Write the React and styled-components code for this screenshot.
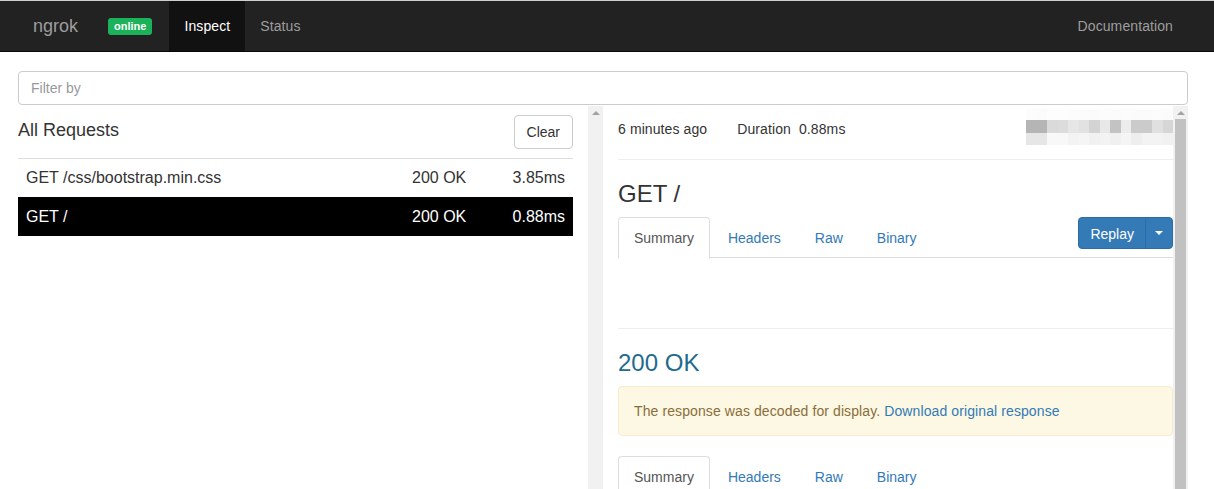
import React from "react";
import styled, { createGlobalStyle } from "styled-components";

const GlobalStyle = createGlobalStyle`
  html, body {
    margin: 0;
    padding: 0;
    height: 100%;
    background: #fff;
    font-family: "Liberation Sans", Arial, sans-serif;
    font-size: 14px;
    line-height: 1.42857;
    color: #333;
  }
  * { box-sizing: border-box; }
`;

const requests = [
  { path: "GET /css/bootstrap.min.css", status: "200 OK", duration: "3.85ms" },
  { path: "GET /", status: "200 OK", duration: "0.88ms", selected: true },
];

// pixelated (blurred out) client address
const blurRows = [
  { h: 11, cells: ["#fcfcfc", "#fbfbfb", "#fdfdfd", "#fdfdfd", "#fcfcfc", "#fcfcfc", "#fbfbfb", "#fcfcfc", "#fbfbfb", "#fcfcfc", "#fbfbfb", "#fbfbfb", "#fcfcfc", "#fbfbfb"] },
  { h: 13, cells: ["#b5b5b5", "#b5b5b5", "#dadada", "#dcdcdc", "#e6e6e6", "#e2e2e2", "#d3d3d3", "#e8e8e8", "#c3c3c3", "#ececec", "#cbcbcb", "#cbcbcb", "#e0e0e0", "#d6d6d6"] },
  { h: 12, cells: ["#e6e6e6", "#e6e6e6", "#f8f8f8", "#f8f8f8", "#f3f3f3", "#f5f5f5", "#f1f1f1", "#f3f3f3", "#f0f0f0", "#f5f5f5", "#eeeeee", "#f3f3f3", "#f3f3f3", "#f1f1f1"] },
];

const tabNames = ["Summary", "Headers", "Raw", "Binary"];

const Page = styled.div`
  height: 100vh;
  display: flex;
  flex-direction: column;
  overflow: hidden;
`;

const Navbar = styled.nav`
  height: 52px;
  flex-shrink: 0;
  display: flex;
  align-items: stretch;
  background: #222;
  border-top: 1px solid #cfcfcf;
  border-bottom: 1px solid #080808;
  padding: 0 26px 0 18px;
`;

const Brand = styled.span`
  display: flex;
  align-items: center;
  padding: 1px 15px 0;
  font-size: 18px;
  color: #9d9d9d;
`;

const Badge = styled.span`
  align-self: center;
  margin: 1px 17px 0 15px;
  padding: 1px 6px 2px;
  background: #1cb25a;
  color: #fff;
  font-size: 11px;
  font-weight: bold;
  line-height: 14px;
  border-radius: 3px;
`;

const NavLink = styled.a`
  display: flex;
  align-items: center;
  padding: 1px 15px 0;
  font-size: 14px;
  letter-spacing: 0.1px;
  color: ${(p) => (p.$active ? "#fff" : "#9d9d9d")};
  background: ${(p) => (p.$active ? "#111" : "transparent")};
  text-decoration: none;
  margin-left: ${(p) => (p.$right ? "auto" : "0")};
`;

const Container = styled.div`
  flex: 1;
  min-height: 0;
  display: flex;
  flex-direction: column;
  padding: 19px 26px 0 18px;
`;

const Filter = styled.input`
  width: 100%;
  height: 34px;
  flex-shrink: 0;
  padding: 6px 12px;
  font-family: inherit;
  font-size: 14px;
  color: #555;
  border: 1px solid #ccc;
  border-radius: 4px;
  margin-bottom: 1px;
  &::placeholder { color: #999; }
`;

const Main = styled.div`
  flex: 1;
  min-height: 0;
  display: flex;
`;

const LeftCol = styled.div`
  width: 555px;
  flex-shrink: 0;
  margin-right: 15px;
`;

const ListHeader = styled.div`
  display: flex;
  align-items: center;
  justify-content: space-between;
  padding-top: 9px;
  margin-bottom: 9px;
`;

const ListTitle = styled.h4`
  margin: 0 0 3px;
  font-size: 18px;
  font-weight: 500;
  line-height: 1.1;
`;

const Button = styled.button`
  height: 34px;
  padding: 6px 12px;
  font-family: inherit;
  font-size: 14px;
  color: #333;
  background: #fff;
  border: 1px solid #ccc;
  border-radius: 4px;
`;

const ReqRow = styled.div`
  display: flex;
  height: 39px;
  align-items: center;
  padding: 0 8px;
  border-top: 1px solid #ddd;
  font-size: 16px;
  background: ${(p) => (p.$selected ? "#000" : "#fff")};
  color: ${(p) => (p.$selected ? "#fff" : "#333")};
  border-top-color: ${(p) => (p.$selected ? "#000" : "#ddd")};
`;

const ReqPath = styled.span`
  flex: 1;
`;

const ReqStatus = styled.span`
  width: 98px;
`;

const ReqDuration = styled.span`
  width: 55px;
  text-align: right;
`;

const Track = styled.div`
  width: 15px;
  flex-shrink: 0;
  background: #f1f1f1;
  display: flex;
  flex-direction: column;
  align-items: center;
  padding-top: 5px;
`;

const Arrow = styled.div`
  width: 0;
  height: 0;
  border-left: 4px solid transparent;
  border-right: 4px solid transparent;
  border-bottom: 4px solid #a3a3a3;
  margin-bottom: 4px;
`;

const Thumb = styled.div`
  width: 11px;
  flex: 1;
  background: #c1c1c1;
`;

const RightPane = styled.div`
  flex: 1;
  display: flex;
  min-width: 0;
  padding-left: 15px;
`;

const Detail = styled.div`
  flex: 1;
  min-width: 0;
  overflow: hidden;
`;

const Meta = styled.div`
  display: flex;
  align-items: center;
  height: 40px;
  margin-top: 3px;
  padding-top: 2px;
  letter-spacing: 0.1px;
`;

const MetaItem = styled.span`
  margin-right: 30px;
`;

const MetaValue = styled.span`
  margin-left: 8px;
`;

const Blur = styled.div`
  margin-left: auto;
  align-self: flex-start;
  margin-top: -2px;
  display: flex;
  flex-direction: column;
`;

const BlurRow = styled.div`
  display: grid;
  grid-template-columns: repeat(14, 10.5px);
`;

const Rule = styled.hr`
  border: 0;
  border-top: 1px solid #eee;
  margin: ${(p) => p.$margin || "20px 0"};
`;

const Title = styled.h3`
  margin: 20px 0 10px;
  font-size: 24px;
  font-weight: 500;
  line-height: 27px;
  color: ${(p) => p.$color || "#333"};
`;

const TabBar = styled.div`
  display: flex;
  align-items: flex-start;
  border-bottom: 1px solid #ddd;
  height: 41px;
`;

const Tab = styled.a`
  margin-right: 2px;
  margin-bottom: -1px;
  padding: 10px 15px;
  line-height: 20px;
  border: 1px solid ${(p) => (p.$active ? "#ddd" : "transparent")};
  border-bottom-color: ${(p) => (p.$active ? "#fff" : "transparent")};
  border-radius: 4px 4px 0 0;
  background: ${(p) => (p.$active ? "#fff" : "transparent")};
  color: ${(p) => (p.$active ? "#555" : "#337ab7")};
  text-decoration: none;
`;

const SplitButton = styled.div`
  margin-left: auto;
  display: flex;
  height: 32px;
`;

const PrimaryPart = styled.button`
  padding: ${(p) => (p.$caret ? "0 9px" : "1px 11px 0")};
  font-family: inherit;
  font-size: 14px;
  color: #fff;
  background: #337ab7;
  border: 1px solid #2e6da4;
  border-radius: ${(p) => (p.$caret ? "0 4px 4px 0" : "4px 0 0 4px")};
  margin-left: ${(p) => (p.$caret ? "-1px" : "0")};
  display: flex;
  align-items: center;
`;

const Caret = styled.span`
  width: 0;
  height: 0;
  border-left: 4px solid transparent;
  border-right: 4px solid transparent;
  border-top: 4px solid #fff;
`;

const TabContent = styled.div`
  height: 50px;
`;

const Alert = styled.div`
  padding: 15px;
  line-height: 18px;
  background: #fcf8e3;
  border: 1px solid #faebcc;
  border-radius: 4px;
  color: #8a6d3b;
  margin-bottom: 20px;
  letter-spacing: 0.1px;
`;

const Link = styled.a`
  color: #337ab7;
  text-decoration: none;
`;

function Tabs({ children }) {
  return (
    <TabBar>
      {tabNames.map((t, i) => (
        <Tab key={t} $active={i === 0}>
          {t}
        </Tab>
      ))}
      {children}
    </TabBar>
  );
}

export default function App() {
  return (
    <Page>
      <GlobalStyle />
      <Navbar>
        <Brand>ngrok</Brand>
        <Badge>online</Badge>
        <NavLink $active>Inspect</NavLink>
        <NavLink>Status</NavLink>
        <NavLink $right>Documentation</NavLink>
      </Navbar>
      <Container>
        <Filter placeholder="Filter by" />
        <Main>
          <LeftCol>
            <ListHeader>
              <ListTitle>All Requests</ListTitle>
              <Button>Clear</Button>
            </ListHeader>
            {requests.map((r) => (
              <ReqRow key={r.path} $selected={r.selected}>
                <ReqPath>{r.path}</ReqPath>
                <ReqStatus>{r.status}</ReqStatus>
                <ReqDuration>{r.duration}</ReqDuration>
              </ReqRow>
            ))}
          </LeftCol>
          <Track>
            <Arrow />
          </Track>
          <RightPane>
            <Detail>
              <Meta>
                <MetaItem>6 minutes ago</MetaItem>
                <MetaItem>
                  Duration<MetaValue>0.88ms</MetaValue>
                </MetaItem>
                <Blur>
                  {blurRows.map((row, i) => (
                    <BlurRow key={i} style={{ height: row.h }}>
                      {row.cells.map((c, j) => (
                        <div key={j} style={{ background: c }} />
                      ))}
                    </BlurRow>
                  ))}
                </Blur>
              </Meta>
              <Rule $margin="10px 0 20px" />
              <Title>GET /</Title>
              <Tabs>
                <SplitButton>
                  <PrimaryPart>Replay</PrimaryPart>
                  <PrimaryPart $caret>
                    <Caret />
                  </PrimaryPart>
                </SplitButton>
              </Tabs>
              <TabContent />
              <Rule $margin="20px 0 0" />
              <Title $color="#1f6b8d">200 OK</Title>
              <Alert>
                The response was decoded for display.{" "}
                <Link>Download original response</Link>
              </Alert>
              <Tabs />
            </Detail>
            <Track>
              <Arrow />
              <Thumb />
            </Track>
          </RightPane>
        </Main>
      </Container>
    </Page>
  );
}
